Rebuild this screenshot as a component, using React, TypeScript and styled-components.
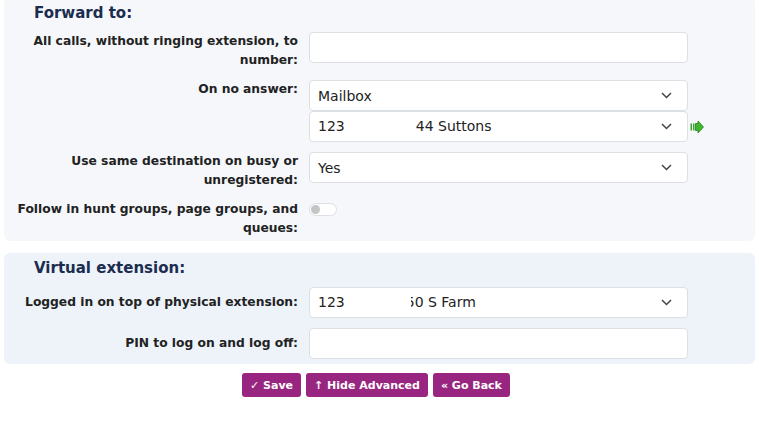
import React from "react";
import styled, { createGlobalStyle } from "styled-components";

const Global = createGlobalStyle`
  html, body { margin: 0; padding: 0; background: #ffffff; }
  body { font-family: "DejaVu Sans", Verdana, sans-serif; color: #222; }
`;

const Page = styled.div`
  padding: 0 4px;
  overflow: hidden;
  height: 447px;
  box-sizing: border-box;
`;

const Panel = styled.section<{ $tone: string; $first?: boolean }>`
  background: ${(p) => p.$tone};
  border-radius: 6px;
  padding: 5px 8px ${(p) => (p.$first ? "3px" : "5px")} 8px;
  margin-top: ${(p) => (p.$first ? "-2px" : "12px")};
`;

const Heading = styled.h2`
  margin: 0 0 9px 0;
  padding-left: 22px;
  font-size: 15px;
  line-height: 20px;
  font-weight: bold;
  color: #1b2d4f;
`;

const Form = styled.div`
  display: grid;
  grid-template-columns: 286px auto;
  column-gap: 11px;
  row-gap: 10px;
  justify-content: start;
`;

const Label = styled.div<{ $middle?: boolean }>`
  text-align: right;
  font-size: 12.27px;
  line-height: 19px;
  font-weight: bold;
  color: #222;
  align-self: ${(p) => (p.$middle ? "center" : "start")};
`;

const Control = styled.div`
  display: flex;
  flex-direction: column;
`;

const Field = styled.div`
  box-sizing: border-box;
  width: 379px;
  height: 31px;
  background: #fff;
  border: 1px solid #dcdfe4;
  border-radius: 4px;
`;

const SelectBox = styled.div`
  box-sizing: border-box;
  width: 379px;
  height: 31px;
  background: #fff;
  border: 1px solid #dcdfe4;
  border-radius: 4px;
  display: flex;
  align-items: center;
  padding: 0 15px 0 8px;
  font-size: 14px;
  color: #222;
  white-space: nowrap;
`;

const SelectText = styled.span`
  flex: 1;
  overflow: hidden;
`;

const Redact = styled.span<{ $w: number; $overlap: number }>`
  position: relative;
  display: inline-block;
  vertical-align: middle;
  width: ${(p) => p.$w}px;
  height: 20px;
  background: #fff;
  margin-right: ${(p) => -p.$overlap}px;
`;

const SelectLine = styled.div`
  display: flex;
  align-items: center;
`;

const GoIcon = styled.svg`
  margin-left: 2px;
  flex-shrink: 0;
`;

const Toggle = styled.div`
  box-sizing: border-box;
  width: 28px;
  height: 13px;
  margin-top: 3px;
  border: 1px solid #dcdfe4;
  border-radius: 7px;
  background: #fff;
  display: flex;
  align-items: center;
  padding-left: 1px;
`;

const Knob = styled.span`
  width: 9px;
  height: 9px;
  border-radius: 50%;
  background: #c4c4c4;
`;

const Buttons = styled.div`
  display: flex;
  justify-content: center;
  gap: 5px;
  margin-top: 9px;
  padding-right: 7px;
`;

const Button = styled.button`
  height: 24px;
  padding: 0 8px;
  border: none;
  border-radius: 3px;
  background: #982680;
  color: #fff;
  font-family: "DejaVu Sans", Verdana, sans-serif;
  font-weight: bold;
  font-size: 11px;
  cursor: pointer;
`;

const Chevron = () => (
  <svg width="11" height="7" viewBox="0 0 11 7">
    <path d="M1 1 L5.5 5.5 L10 1" fill="none" stroke="#444" strokeWidth="1.5" />
  </svg>
);

const Select: React.FC<{ children: React.ReactNode }> = ({ children }) => (
  <SelectBox>
    <SelectText>{children}</SelectText>
    <Chevron />
  </SelectBox>
);

export default function App() {
  return (
    <>
      <Global />
      <Page>
        <Panel $tone="#f5f7fb" $first>
          <Heading>Forward to:</Heading>
          <Form>
            <Label>All calls, without ringing extension, to number:</Label>
            <Control>
              <Field />
            </Control>

            <Label>On no answer:</Label>
            <Control>
              <Select>Mailbox</Select>
              <SelectLine>
                <Select>
                  123
                  <Redact $w={71} $overlap={0} />
                  44 Suttons
                </Select>
                <GoIcon width="14" height="14" viewBox="0 0 14 14">
                  <rect x="0.5" y="3.5" width="1.5" height="7" fill="#3aa52a" />
                  <rect x="3" y="3.5" width="1.5" height="7" fill="#3aa52a" />
                  <path d="M5.5 3.5 H8 V1 L13.5 7 L8 13 V10.5 H5.5 Z" fill="#41b52f" stroke="#23861b" strokeWidth="0.8" />
                </GoIcon>
              </SelectLine>
            </Control>

            <Label>Use same destination on busy or unregistered:</Label>
            <Control>
              <Select>Yes</Select>
            </Control>

            <Label>Follow in hunt groups, page groups, and queues:</Label>
            <Control>
              <Toggle>
                <Knob />
              </Toggle>
            </Control>
          </Form>
        </Panel>

        <Panel $tone="#eef3fa">
          <Heading>Virtual extension:</Heading>
          <Form>
            <Label $middle>Logged in on top of physical extension:</Label>
            <Control>
              <Select>
                123
                <Redact $w={66} $overlap={5} />
                50 S Farm
              </Select>
            </Control>

            <Label $middle>PIN to log on and log off:</Label>
            <Control>
              <Field />
            </Control>
          </Form>
        </Panel>

        <Buttons>
          <Button>✓ Save</Button>
          <Button>↑ Hide Advanced</Button>
          <Button>« Go Back</Button>
        </Buttons>
      </Page>
    </>
  );
}
